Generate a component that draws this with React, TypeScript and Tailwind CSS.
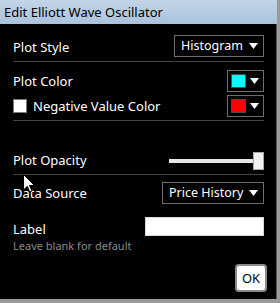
function Caret() {
  return (
    <svg width="9" height="6" viewBox="0 0 9 6" className="shrink-0">
      <path d="M0 0 H9 L4.5 6 Z" fill="#ffffff" />
    </svg>
  );
}

function Select({ value, width }: { value: string; width: string }) {
  return (
    <div className={`flex h-[22px] ${width} items-center justify-between border border-[#6e6e6e] pl-[6px] pr-[5px]`}>
      <span className="text-[12.5px] leading-none text-white">{value}</span>
      <Caret />
    </div>
  );
}

function ColorPicker({ color }: { color: string }) {
  return (
    <div className="flex h-[22px] w-[37px] items-center justify-between border border-[#6e6e6e] pl-[3px] pr-[4px]">
      <div className={`h-[14px] w-[15px] border border-[#4a4a4a] ${color}`} />
      <Caret />
    </div>
  );
}

function Divider() {
  return <div className="h-px bg-[#444444]" />;
}

function Cursor() {
  return (
    <svg className="absolute left-[23px] top-[174px]" width="13" height="19" viewBox="0 0 13 19">
      <path d="M0.5 0.5 V16 L4.2 12.3 L6.8 18 L9 17 L6.5 11.5 H11.5 Z" fill="#ffffff" stroke="#000000" strokeWidth="1" />
    </svg>
  );
}

export default function App() {
  return (
    <div className="relative flex h-[303px] w-[280px] flex-col border-r-[3px] border-b-[4px] border-[#9a9a9a] bg-black font-['Noto_Sans','Open_Sans',sans-serif]">
      <div className="flex h-[24px] shrink-0 items-center bg-gradient-to-b from-[#c3d4e7] to-[#a9c3dd] pl-[4px]">
        <span className="text-[13px] leading-none text-black">Edit Elliott Wave Oscillator</span>
      </div>
      <div className="flex flex-1 flex-col border-r border-[#5a5a5a] pl-[13px] pr-[12px]">
        <div className="flex h-[37px] items-end justify-between pb-[4px]">
          <span className="pb-[3px] text-[13px] leading-none text-white">Plot Style</span>
          <Select value="Histogram" width="w-[90px]" />
        </div>
        <Divider />
        <div className="flex flex-col gap-[3px] pt-[8px]">
          <div className="flex items-center justify-between">
            <span className="text-[13px] leading-none text-white">Plot Color</span>
            <ColorPicker color="bg-[#00ffff]" />
          </div>
          <div className="flex items-center justify-between">
            <div className="flex items-center gap-[6px]">
              <div className="h-[14px] w-[14px] border border-[#7a7a7a] bg-white" />
              <span className="text-[13px] leading-none text-white">Negative Value Color</span>
            </div>
            <ColorPicker color="bg-[#ff0000]" />
          </div>
        </div>
        <div className="pt-[3px]">
          <Divider />
        </div>
        <div className="flex h-[53px] items-end justify-between pb-[4px]">
          <span className="pb-[3px] text-[13px] leading-none text-white">Plot Opacity</span>
          <div className="relative flex h-[18px] w-[95px] items-center">
            <div className="h-[4px] w-[88px] bg-[#e6e6e6]" />
            <div className="absolute right-0 top-0 h-[18px] w-[11px] border border-[#a8a8a8] bg-[#f0f0f0]" />
          </div>
        </div>
        <Divider />
        <div className="flex items-center justify-between pt-[7px]">
          <span className="text-[13px] leading-none text-white">Data Source</span>
          <Select value="Price History" width="w-[102px]" />
        </div>
        <div className="flex justify-between pt-[13px]">
          <div className="flex flex-col gap-[4px] pt-[6px]">
            <span className="text-[13px] leading-none text-white">Label</span>
            <span className="text-[11px] leading-none text-[#8a8a8a]">Leave blank for default</span>
          </div>
          <div className="h-[19px] w-[119px] border border-[#d8d8d8] bg-white" />
        </div>
        <div className="flex flex-1 items-end justify-end pb-[7px]">
          <button className="mr-[-3px] flex h-[28px] w-[32px] items-center justify-center rounded-[4px] border-2 border-[#8a8a8a] bg-white text-[13px] leading-none text-black">
            OK
          </button>
        </div>
      </div>
      <Cursor />
    </div>
  );
}
